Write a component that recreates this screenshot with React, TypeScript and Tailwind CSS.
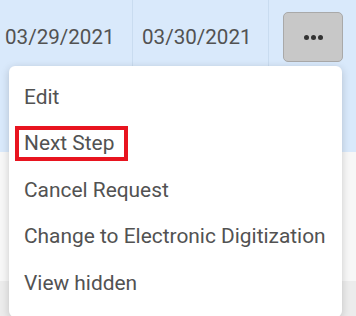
export default function App() {
  const items = ["Edit", "Next Step", "Cancel Request", "Change to Electronic Digitization", "View hidden"]

  return (
    <div className="relative h-[316px] w-[356px] overflow-hidden bg-[#ececec] font-['Roboto',sans-serif] text-[#525252]">
      <div className="flex h-[152px] bg-[#d9e9fb]">
        <div className="w-[133px] border-r border-[#c9dcf0] pt-[22px] pl-[5px] text-[20.6px]">03/29/2021</div>
        <div className="w-[136px] border-r border-[#c9dcf0] pt-[22px] pl-[9px] text-[20.6px]">03/30/2021</div>
        <div className="flex-1 pt-[12px] pl-[14px]">
          <button
            type="button"
            className="flex h-[50px] w-[60px] items-center justify-center gap-[2px] rounded-[5px] border border-[#a9a9a9] bg-[#c8c8c8]"
          >
            <span className="h-[5px] w-[5px] rounded-full bg-[#333]" />
            <span className="h-[5px] w-[5px] rounded-full bg-[#333]" />
            <span className="h-[5px] w-[5px] rounded-full bg-[#333]" />
          </button>
        </div>
      </div>
      <div className="h-[129px] bg-[#f7f7f7]" />

      <div className="absolute left-[9px] top-[66px] w-[333px] rounded-[6px] bg-white pt-[8px] pb-[10px] shadow-[0_2px_8px_rgba(0,0,0,0.18)]">
        {items.map((label) => (
          <div key={label} className="flex h-[46.5px] items-center pl-[15px] text-[20.9px]">
            {label === "Next Step" ? (
              <span className="-ml-[9px] border-4 border-[#e8141f] pl-[5px] pr-[10px] leading-[27px]">{label}</span>
            ) : (
              label
            )}
          </div>
        ))}
      </div>
    </div>
  )
}
